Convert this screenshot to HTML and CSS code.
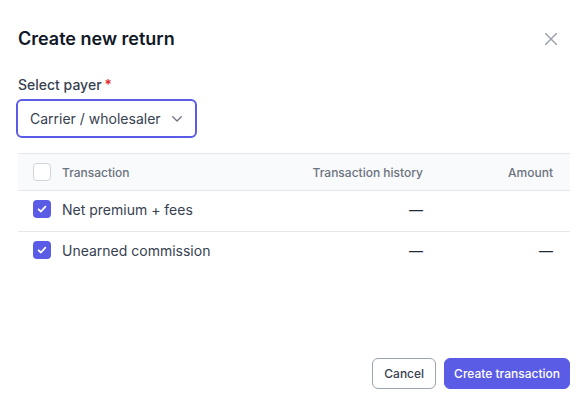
FILE: index.html
```html
<!DOCTYPE html>
<html lang="en">
<head>
<meta charset="utf-8">
<title>Create new return</title>
<link rel="stylesheet" href="styles.css">
</head>
<body>
<div class="dialog">
  <div class="dialog-header">
    <h1 class="title">Create new return</h1>
    <button class="close" aria-label="Close">
      <svg width="12" height="12" viewBox="0 0 12 12"><path d="M0.5 0.5L11.5 11.5M11.5 0.5L0.5 11.5" stroke="#9ca3af" stroke-width="1.5" fill="none" stroke-linecap="round"/></svg>
    </button>
  </div>

  <label class="field-label">Select payer<span class="req">*</span></label>
  <div class="select">
    <span>Carrier / wholesaler</span>
    <svg width="10" height="6" viewBox="0 0 10 6"><path d="M0.75 0.75L5 5L9.25 0.75" stroke="#6b7280" stroke-width="1.3" fill="none" stroke-linecap="round" stroke-linejoin="round"/></svg>
  </div>

  <div class="table">
    <div class="row head">
      <div class="cell first"><span class="cb"></span>Transaction</div>
      <div class="cell num">Transaction history</div>
      <div class="cell num">Amount</div>
    </div>
    <div class="row body">
      <div class="cell first"><span class="cb checked"><svg width="18" height="18" viewBox="0 0 18 18"><path d="M5.6 9.3L7.9 11.5L12.4 6.6" stroke="#fff" stroke-width="1.8" fill="none" stroke-linecap="round" stroke-linejoin="round"/></svg></span>Net premium + fees</div>
      <div class="cell num">—</div>
      <div class="cell num"></div>
    </div>
    <div class="row body last">
      <div class="cell first"><span class="cb checked"><svg width="18" height="18" viewBox="0 0 18 18"><path d="M5.6 9.3L7.9 11.5L12.4 6.6" stroke="#fff" stroke-width="1.8" fill="none" stroke-linecap="round" stroke-linejoin="round"/></svg></span>Unearned commission</div>
      <div class="cell num">—</div>
      <div class="cell num">—</div>
    </div>
  </div>

  <div class="footer">
    <button class="btn secondary">Cancel</button>
    <button class="btn primary">Create transaction</button>
  </div>
</div>
</body>
</html>
```
FILE: styles.css
```css
html, body {
  margin: 0;
  height: 100%;
  background: #ffffff;
}
body {
  font-family: Inter, "Noto Sans", sans-serif;
  color: #374151;
}
.dialog {
  box-sizing: border-box;
  height: 100%;
  display: flex;
  flex-direction: column;
  padding: 25px 18px 16px;
}
.dialog-header {
  display: flex;
  justify-content: space-between;
  align-items: center;
}
.title {
  margin: 0;
  font-size: 18px;
  line-height: 28px;
  font-weight: 600;
  color: #111827;
}
.close {
  border: 0;
  background: none;
  padding: 0;
  margin-right: 13px;
  width: 12px;
  height: 12px;
  display: flex;
}
.field-label {
  margin-top: 22px;
  font-size: 14px;
  line-height: 20px;
  font-weight: 500;
  color: #374151;
}
.req {
  color: #dc2626;
  margin-left: 3px;
}
.select {
  margin-top: 4px;
  margin-left: -2px;
  align-self: flex-start;
  box-sizing: border-box;
  height: 39px;
  display: flex;
  align-items: center;
  gap: 11px;
  padding: 0 13px 0 12px;
  border: 2px solid #5b5ce6;
  border-radius: 6px;
  font-size: 14px;
  color: #374151;
}
.table {
  margin-top: 15px;
  border-top: 1px solid #e5e7eb;
}
.row {
  display: grid;
  grid-template-columns: 1fr 150px 130px;
  align-items: center;
  padding: 0 17px 0 15px;
}
.row.head {
  height: 36px;
  background: #f9fafb;
  border-bottom: 1px solid #e5e7eb;
  font-size: 12px;
  font-weight: 500;
  color: #6b7280;
}
.row.body {
  height: 36px;
  padding-bottom: 4px;
  border-bottom: 1px solid #e5e7eb;
  font-size: 14px;
  color: #374151;
}
.row.body.last {
  border-bottom: 0;
}
.cell.first {
  display: flex;
  align-items: center;
  gap: 11px;
}
.cell.num {
  text-align: right;
  color: #1f2937;
}
.row.head .cell.num {
  color: #6b7280;
}
.cb {
  box-sizing: border-box;
  width: 18px;
  height: 18px;
  border: 1px solid #d1d5db;
  border-radius: 4px;
  background: #fff;
  display: flex;
  flex: none;
}
.cb.checked {
  border: 0;
  background: #5b5ce6;
}
.footer {
  margin-top: auto;
  display: flex;
  justify-content: flex-end;
  gap: 8px;
}
.btn {
  box-sizing: border-box;
  height: 31px;
  padding: 0 10px;
  border-radius: 6px;
  font-family: Inter, "Noto Sans", sans-serif;
  font-size: 12px;
  font-weight: 500;
  line-height: 29px;
}
.btn.secondary {
  padding: 0 11px;
  background: #fff;
  border: 1px solid #9ca3af;
  color: #374151;
}
.btn.primary {
  padding: 0 9px;
  background: #5b5ce6;
  border: 1px solid #5b5ce6;
  color: #fff;
}
```
